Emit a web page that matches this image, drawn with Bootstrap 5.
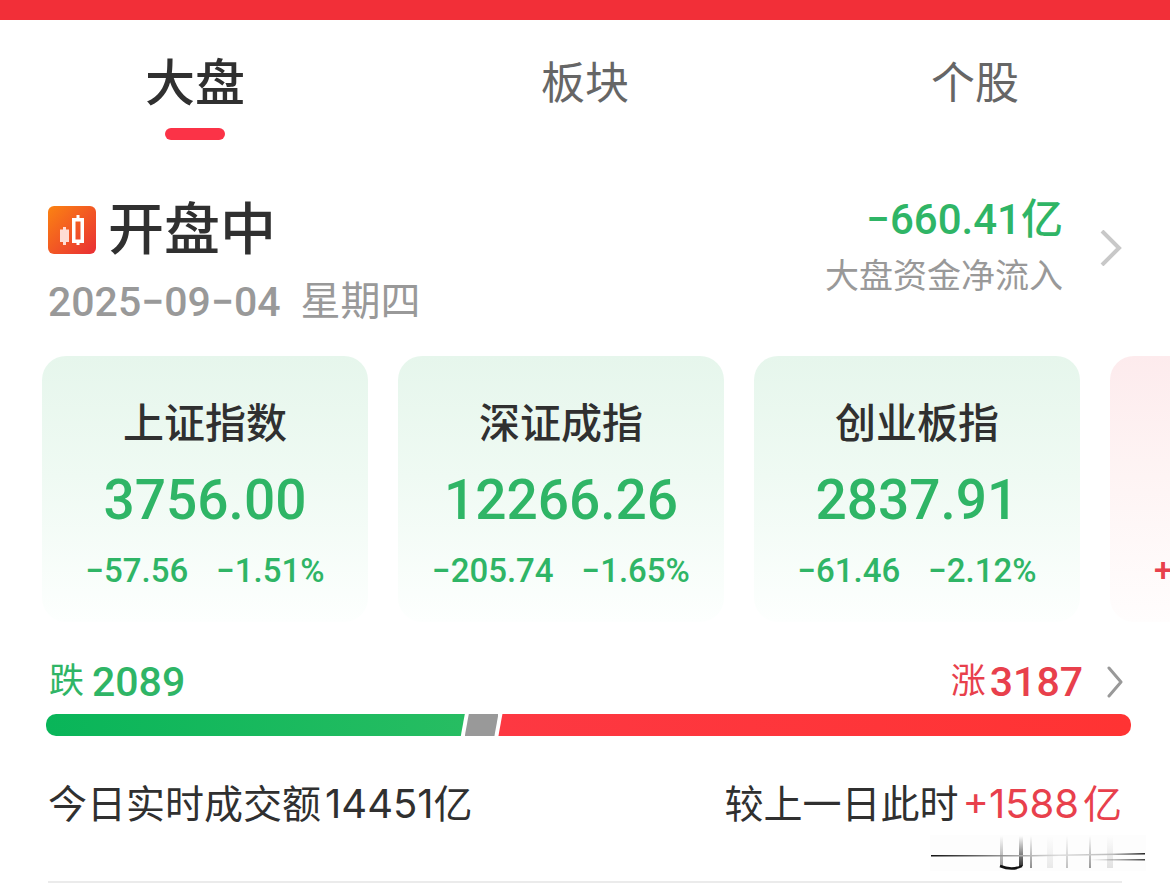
<!DOCTYPE html>
<html lang="zh-CN">
<head>
<meta charset="utf-8">
<meta name="viewport" content="width=device-width, initial-scale=1">
<title>大盘</title>
<link href="https://cdn.jsdelivr.net/npm/bootstrap@5.3.0/dist/css/bootstrap.min.css" rel="stylesheet">
<style>
  :root { --ink: #303030; --dim: #999; --fall: #2fb566; --rise: #e8404c; }
  body { font-family: Roboto, "Noto Sans CJK SC", sans-serif; color: var(--ink); background: #fff; overflow-x: hidden; }
  a { color: inherit; text-decoration: none; }
  .top-strip { height: 20px; background: #f22f38; }
  .fall { color: var(--fall); }
  .rise { color: var(--rise); }
  .dim { color: var(--dim); }

  .market-tabs { height: 136px; }
  .market-tabs .nav-link { padding: 28px 0 0; font-size: 44px; line-height: 72px; color: #666; }
  .market-tabs .nav-link.active { font-size: 50px; font-weight: 500; color: var(--ink); }
  .market-tabs .nav-link.active::after { content: ""; display: block; width: 60px; height: 12px; margin: 8px auto 0; border-radius: 6px; background: #fb3347; }

  .session { padding: 34px 48px 0; }
  .session h1 { font-size: 56px; font-weight: 500; line-height: 80px; }
  .session .date { font-size: 40px; line-height: 64px; }
  .date .day { font-weight: 500; font-size: 41px; }
  .flow-value { font-size: 42px; font-weight: 500; line-height: 60px; }
  .flow-label { font-size: 34px; line-height: 52px; }
  .flow-link { gap: 37px; }
  .flow-link svg { margin-top: 40px; }

  .indices { gap: 30px; padding: 22px 0 0 42px; overflow: hidden; }
  .index-tile { flex: 0 0 calc((100% - 150px) / 3); height: 266px; padding-top: 38px; border-radius: 24px; background: linear-gradient(#e6f6ec, #effaf3 45%, #fdfffe); }
  .index-tile.up { background: linear-gradient(#fdebed, #fef4f4 45%, #fffdfd); }
  .index-tile h2 { font-size: 41px; font-weight: 500; line-height: 60px; }
  .index-tile .points { font-size: 55px; font-weight: 500; line-height: 92px; }
  .index-tile .delta { font-size: 33px; font-weight: 500; line-height: 50px; gap: 28px; }
  .index-tile.up .delta { padding: 152px 0 0 44px; }

  .breadth { padding: 28px 39px 0 46px; }
  .breadth .counts { font-size: 35px; line-height: 64px; padding: 0 8px 0 3px; }
  .breadth .num { font-size: 41px; font-weight: 500; line-height: 64px; }
  .split-bar { height: 22px; border-radius: 10px; }
  .split-bar > span { display: block; }
  .seg-fall { background: linear-gradient(90deg, #09b559, #27bd62); clip-path: polygon(0 0, 100% 0, calc(100% - 4px) 100%, 0 100%); }
  .seg-flat { background: #999; clip-path: polygon(4px 0, 100% 0, calc(100% - 4px) 100%, 0 100%); }
  .seg-rise { background: linear-gradient(90deg, #fd3842, #ff3333); clip-path: polygon(4px 0, 100% 0, 100% 100%, 0 100%); }

  .turnover { padding: 38px 48px 0; font-size: 39px; line-height: 60px; }
  .turnover .fig { font-family: Inter, "Noto Sans CJK SC", sans-serif; font-size: 40px; }
  .streaks { width: 216px; height: 38px; margin-right: 24px; }
  .rule { height: 2px; margin: 8px 48px 0; background: #ebebeb; }
</style>
</head>
<body>
<div class="top-strip"></div>

<nav class="nav nav-fill nav-justified market-tabs">
  <a class="nav-link active" href="#market" aria-current="page">大盘</a>
  <a class="nav-link" href="#sector">板块</a>
  <a class="nav-link" href="#stock">个股</a>
</nav>

<main id="market">
  <section class="session d-flex justify-content-between">
    <div>
      <div class="d-flex align-items-center">
        <svg width="48" height="48" viewBox="0 0 48 48" aria-hidden="true">
          <defs><linearGradient id="ember" x1="0" y1="0" x2="1" y2="1"><stop offset="0" stop-color="#fb8312"/><stop offset="1" stop-color="#e92e35"/></linearGradient></defs>
          <rect width="48" height="48" rx="6" fill="url(#ember)"/>
          <path d="M12 23.500h3V21h3v2.500h3v12.500h-3v3h-3v-3h-3z" fill="#ffdcd4"/>
          <path fill-rule="evenodd" d="M24 12h4.500V9h3v3H36v25h-4.500v2h-3v-2H24zm3.500 3.500v18h5v-18z" fill="#fff"/>
        </svg>
        <h1 class="mb-0 ms-2 ps-1">开盘中</h1>
      </div>
      <div class="date dim d-flex align-items-center"><span class="day">2025−09−04</span><span class="ms-3 ps-1">星期四</span></div>
    </div>
    <a class="flow-link d-flex align-items-start text-end" href="#flow">
      <span>
        <span class="flow-value fall d-block">−660.41亿</span>
        <span class="flow-label dim d-block">大盘资金净流入</span>
      </span>
      <svg width="22" height="36" viewBox="0 0 22 36" fill="none" stroke="#c8c8c8" stroke-width="4" aria-hidden="true"><path d="M2 1l17 17L2 35"/></svg>
    </a>
  </section>

  <section class="indices d-flex text-center">
    <article class="index-tile">
      <h2 class="mb-0">上证指数</h2>
      <div class="points fall">3756.00</div>
      <div class="delta fall d-flex justify-content-center"><span>−57.56</span><span>−1.51%</span></div>
    </article>
    <article class="index-tile">
      <h2 class="mb-0">深证成指</h2>
      <div class="points fall">12266.26</div>
      <div class="delta fall d-flex justify-content-center"><span>−205.74</span><span>−1.65%</span></div>
    </article>
    <article class="index-tile">
      <h2 class="mb-0">创业板指</h2>
      <div class="points fall">2837.91</div>
      <div class="delta fall d-flex justify-content-center"><span>−61.46</span><span>−2.12%</span></div>
    </article>
    <article class="index-tile up"><div class="delta rise d-flex">+</div></article>
  </section>

  <section class="breadth">
    <div class="counts d-flex justify-content-between">
      <div class="fall d-flex align-items-center">跌<span class="num ms-2">2089</span></div>
      <a class="rise d-flex align-items-center" href="#breadth">涨<span class="num ms-1">3187</span>
        <svg class="ms-4" width="16" height="32" viewBox="0 0 16 32" fill="none" stroke="#999" stroke-width="3" stroke-linecap="round" stroke-linejoin="round" aria-hidden="true"><path d="M2 2l12 14L2 30"/></svg>
      </a>
    </div>
    <div class="split-bar d-flex overflow-hidden" role="img" aria-label="跌 2089，涨 3187">
      <span class="seg-fall" style="width:38.6%"></span>
      <span class="seg-flat" style="width:3.1%"></span>
      <span class="seg-rise" style="width:58.3%"></span>
    </div>
  </section>

  <section class="turnover d-flex justify-content-between">
    <div>今日实时成交额<span class="fig ms-1">14451</span>亿</div>
    <div>较上一日此时<span class="rise"><span class="fig ms-1">+1588</span><span class="ms-1">亿</span></span></div>
  </section>

  <svg class="streaks d-block ms-auto" viewBox="0 0 216 38" aria-hidden="true">
    <defs>
      <linearGradient id="hline"><stop offset="0" stop-color="#111"/><stop offset=".3" stop-color="#888"/><stop offset=".6" stop-color="#ddd"/><stop offset=".85" stop-color="#bbb"/><stop offset="1" stop-color="#222"/></linearGradient>
      <linearGradient id="tail"><stop offset="0" stop-color="#888" stop-opacity="0"/><stop offset="1" stop-color="#444"/></linearGradient>
      <linearGradient id="fade" x1="0" y1="0" x2="0" y2="1"><stop offset="0" stop-color="#333" stop-opacity="0"/><stop offset="1" stop-color="#333"/></linearGradient>
    </defs>
    <rect width="216" height="36" fill="#888" opacity=".02"/>
    <g fill="url(#fade)">
      <rect x="70" y="1" width="3" height="30" opacity=".5"/>
      <rect x="89" y="1" width="4" height="30"/>
      <rect x="100" y="1" width="2" height="32" opacity=".55"/>
      <rect x="117" y="1" width="6" height="32" opacity=".1"/>
      <rect x="136" y="1" width="2" height="32" opacity=".3"/>
      <rect x="159" y="1" width="2" height="32" opacity=".5"/>
      <rect x="177" y="1" width="6" height="32" opacity=".14"/>
    </g>
    <path d="M70 31q12 5 22 0" fill="none" stroke="#111" stroke-width="2.500"/>
    <path d="M1 20h100l114-2v1.500l-114 2H1z" fill="url(#hline)"/>
    <path d="M160 24h55v1.500h-55z" fill="url(#tail)"/>
  </svg>
  <div class="rule"></div>
</main>
<script src="https://cdn.jsdelivr.net/npm/bootstrap@5.3.0/dist/js/bootstrap.bundle.min.js"></script>
</body>
</html>
